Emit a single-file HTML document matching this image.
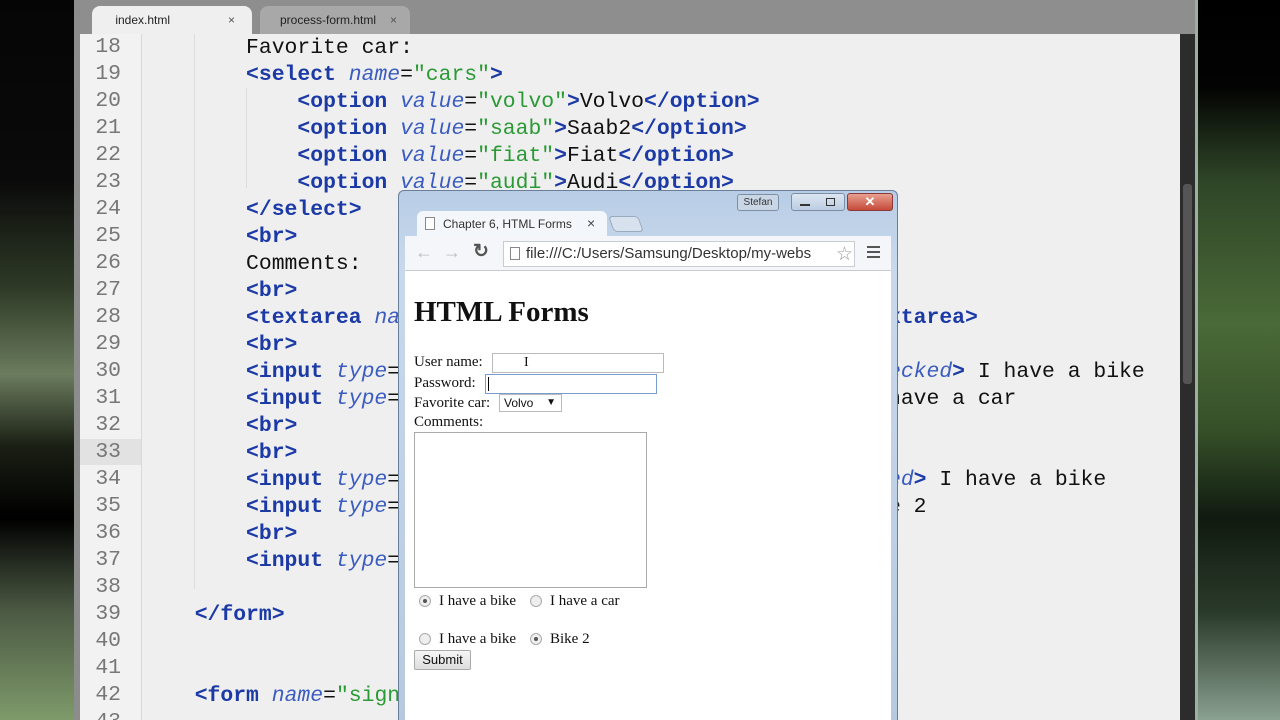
<!DOCTYPE html>
<html><head><meta charset="utf-8"><style>
*{margin:0;padding:0;box-sizing:border-box}
html{overflow:hidden;width:1280px;height:720px}
body{width:1280px;height:720px;overflow:hidden;background:#000;position:relative;font-family:"Liberation Sans",sans-serif}
.bgl{position:absolute;left:0;top:0;width:80px;height:720px;background:linear-gradient(180deg,#050505 0%,#0a0a0a 25%,#2e3a26 40%,#6b7c5e 52%,#1a1f14 62%,#000 72%,#4c5a44 85%,#7e9a6a 100%)}
.bgr{position:absolute;left:1196px;top:0;width:84px;height:720px;background:linear-gradient(180deg,#000 0%,#020302 12%,#2f4527 25%,#4a6a38 45%,#354f28 60%,#101a10 72%,#2a3a2a 85%,#8aa090 100%)}
.ed{position:absolute;left:74px;top:0;width:1124px;height:720px;background:#efefef;border-left:6px solid #8c8c8c;border-right:3px solid #9ab0a0;overflow:hidden}
.tabs{position:absolute;left:0;top:0;width:1118px;height:34px;background:#8e8e8e}
.tab{position:absolute;top:6px;height:28px;font-size:12px;color:#222;padding:7px 0 0 0}
.t1{left:12px;width:160px;background:#efefef;border-radius:8px 8px 0 0}
.t2{left:180px;width:150px;background:#a8a8a8;border-radius:8px 8px 0 0}
.gut{position:absolute;left:0;top:34px;width:62px;height:686px;background:#f2f2f2}
.sb{position:absolute;left:1100px;top:34px;width:18px;height:686px;background:#2c2c2c}
.sb i{position:absolute;left:3px;top:150px;width:9px;height:200px;background:#555;border-radius:3px}
pre{position:absolute;left:0;top:34px;font-family:"Liberation Mono",monospace;font-size:21.4px;line-height:27px;color:#111;white-space:pre}
.ln{color:#777;position:absolute;left:0;top:34px;text-align:right;width:41px;font-family:"Liberation Mono",monospace;font-size:21.4px;line-height:27px;white-space:pre}
.code{left:12px}
.hl{position:absolute;left:0;top:439px;width:62px;height:26px;background:#e2e2e2}
.t{color:#1c3aa6;font-weight:bold}.a{color:#3a5cc0;font-style:italic}.s{color:#2a9a34}
.guide{position:absolute;width:1px;background:#ddd}
.br{position:absolute;left:398px;top:190px;width:500px;height:530px;background:linear-gradient(180deg,#b8cde6,#c9d9ec 80px,#b6c9e0);border:1px solid #6a7e98;border-bottom:none;border-radius:6px 6px 0 0;overflow:hidden}
.content{position:absolute;left:6px;top:80px;width:486px;height:460px;background:#fff;font-family:"Liberation Serif",serif;font-size:15px;color:#111}
.ctab{position:absolute;left:18px;top:20px;width:190px;height:26px;background:#f3f6fa;border-radius:6px 6px 0 0;font-size:12px;color:#333;padding:6px 0 0 26px}
.toolbar{position:absolute;left:6px;top:45px;width:486px;height:35px;background:#f4f6f9;border-bottom:1px solid #c8ccd2}
.url{position:absolute;left:98px;top:5px;width:352px;height:26px;background:#fff;border:1px solid #c9ccd1;font-size:15px;color:#333;padding:3px 0 0 22px;overflow:hidden;white-space:nowrap}
.inp{position:absolute;border:1px solid #bbb;background:#fff}
.radio{position:absolute;width:12px;height:12px;border-radius:50%;border:1px solid #aaa;background:#eee}
.radio.on::after{content:"";position:absolute;left:3px;top:3px;width:4px;height:4px;border-radius:50%;background:#555}
.lb{position:absolute;white-space:nowrap}
</style></head><body>
<div class="bgl"></div><div class="bgr"></div>
<div class="ed">
<div class="tabs"><div class="tab t1">&nbsp;&nbsp;&nbsp;&nbsp;&nbsp;&nbsp;&nbsp;index.html<span style="position:absolute;left:136px;color:#555">×</span></div><div class="tab t2">&nbsp;&nbsp;&nbsp;&nbsp;&nbsp;&nbsp;process-form.html<span style="position:absolute;left:130px;color:#555">×</span></div></div>
<div class="gut"></div><div class="hl"></div>
<div class="guide" style="left:61px;top:34px;height:686px;background:#d8d8d8"></div>
<div class="guide" style="left:114px;top:34px;height:555px"></div>
<div class="guide" style="left:166px;top:88px;height:100px"></div>
<div class="ln">18
19
20
21
22
23
24
25
26
27
28
29
30
31
32
33
34
35
36
37
38
39
40
41
42
43</div>
<pre class="code" style="top:35px">            Favorite car:
            <span class="t">&lt;select</span> <span class="a">name</span>=<span class="s">"cars"</span><span class="t">&gt;</span>
                <span class="t">&lt;option</span> <span class="a">value</span>=<span class="s">"volvo"</span><span class="t">&gt;</span>Volvo<span class="t">&lt;/option&gt;</span>
                <span class="t">&lt;option</span> <span class="a">value</span>=<span class="s">"saab"</span><span class="t">&gt;</span>Saab2<span class="t">&lt;/option&gt;</span>
                <span class="t">&lt;option</span> <span class="a">value</span>=<span class="s">"fiat"</span><span class="t">&gt;</span>Fiat<span class="t">&lt;/option&gt;</span>
                <span class="t">&lt;option</span> <span class="a">value</span>=<span class="s">"audi"</span><span class="t">&gt;</span>Audi<span class="t">&lt;/option&gt;</span>
            <span class="t">&lt;/select&gt;</span>
            <span class="t">&lt;br&gt;</span>
            Comments:
            <span class="t">&lt;br&gt;</span>
            <span class="t">&lt;textarea</span> <span class="a">name</span>=<span class="s">"comments"</span> <span class="a">rows</span>=<span class="s">"10"</span> <span class="a">cols</span>=<span class="s">"30"</span><span class="t">&gt;&lt;/textarea&gt;</span>
            <span class="t">&lt;br&gt;</span>
            <span class="t">&lt;input</span> <span class="a">type</span>=<span class="s">"radio"</span> <span class="a">name</span>=<span class="s">"vehicle"</span> <span class="a">value</span>=<span class="s">"Bike"</span> <span class="a">checked</span><span class="t">&gt;</span> I have a bike
            <span class="t">&lt;input</span> <span class="a">type</span>=<span class="s">"radio"</span> <span class="a">name</span>=<span class="s">"vehicle"</span> <span class="a">value</span>=<span class="s">"Car"</span><span class="t">&gt;</span> I have a car
            <span class="t">&lt;br&gt;</span>
            <span class="t">&lt;br&gt;</span>
            <span class="t">&lt;input</span> <span class="a">type</span>=<span class="s">"radio"</span> <span class="a">name</span>=<span class="s">"bike"</span> <span class="a">value</span>=<span class="s">"Bike"</span> <span class="a">checked</span><span class="t">&gt;</span> I have a bike
            <span class="t">&lt;input</span> <span class="a">type</span>=<span class="s">"radio"</span> <span class="a">name</span>=<span class="s">"bike"</span> <span class="a">value</span>=<span class="s">"Bike2"</span><span class="t">&gt;</span> Bike 2
            <span class="t">&lt;br&gt;</span>
            <span class="t">&lt;input</span> <span class="a">type</span>=<span class="s">"submit"</span> <span class="a">value</span>=<span class="s">"Submit"</span><span class="t">&gt;</span>

        <span class="t">&lt;/form&gt;</span>


        <span class="t">&lt;form</span> <span class="a">name</span>=<span class="s">"signup"</span><span class="t">&gt;</span>
</pre>
<div class="sb"><i></i></div>
</div>

<div class="br">
<div style="position:absolute;left:338px;top:3px;width:42px;height:17px;border:1px solid #7d8ea4;border-radius:3px;background:#c9d6e6;font-size:10px;color:#333;text-align:center;line-height:15px">Stefan</div>
<div style="position:absolute;left:392px;top:2px;width:54px;height:18px;border:1px solid #7d8ea4;border-radius:3px;background:linear-gradient(#dce6f2,#bccde2)"><span style="position:absolute;left:8px;top:10px;width:10px;height:2px;background:#333"></span><span style="position:absolute;left:34px;top:4px;width:9px;height:8px;border:1px solid #333"></span></div>
<div style="position:absolute;left:448px;top:2px;width:46px;height:18px;border:1px solid #8a3a3a;border-radius:3px;background:linear-gradient(#e8a090,#c64a3a);color:#fff;font-size:13px;font-weight:bold;text-align:center;line-height:16px">✕</div>
<div class="ctab"><span style="position:absolute;left:8px;top:6px;width:10px;height:13px;border:1px solid #888;background:#fff"></span>Chapter 6, HTML Forms<span style="position:absolute;left:170px;top:4px;font-size:14px;color:#444">×</span></div>
<div style="position:absolute;left:212px;top:25px;width:30px;height:16px;background:#d8e2ee;border:1px solid #9aaac0;border-radius:4px;transform:skewX(20deg)"></div>
<div class="toolbar">
<span style="position:absolute;left:10px;top:6px;font-size:18px;color:#bbb">←</span>
<span style="position:absolute;left:38px;top:6px;font-size:18px;color:#bbb">→</span>
<span style="position:absolute;left:68px;top:4px;font-size:19px;color:#555;font-weight:bold">↻</span>
<div class="url"><span style="position:absolute;left:6px;top:5px;width:10px;height:13px;border:1px solid #888"></span>file:///C:/Users/Samsung/Desktop/my-webs<span style="position:absolute;right:1px;top:1px;background:#fff;color:#999;font-size:19px">☆</span></div>
<span style="position:absolute;left:462px;top:10px;width:13px;height:2px;background:#555;box-shadow:0 5px 0 #555,0 10px 0 #555"></span>
</div>
<div class="content">
<div style="position:absolute;left:9px;top:25px;font-size:29px;font-weight:bold">HTML Forms</div>
<div class="lb" style="left:9px;top:83px">User name:</div>
<div class="inp" style="left:87px;top:82px;width:172px;height:20px"><span style="position:absolute;left:31px;top:1px;font-size:14px">I</span></div>
<div class="lb" style="left:9px;top:104px">Password:</div>
<div class="inp" style="left:80px;top:103px;width:172px;height:20px;border-color:#7a9ccc"><span style="position:absolute;left:2px;top:2px;width:1px;height:14px;background:#000"></span></div>
<div class="lb" style="left:9px;top:124px">Favorite car:</div>
<div class="inp" style="left:94px;top:123px;width:63px;height:18px;font-family:'Liberation Sans',sans-serif;font-size:12px;padding:1px 4px">Volvo <span style="position:absolute;right:5px;font-size:10px;top:2px">▼</span></div>
<div class="lb" style="left:9px;top:143px">Comments:</div>
<div class="inp" style="left:9px;top:161px;width:233px;height:156px;border-color:#aaa"></div>
<div class="radio on" style="left:14px;top:324px"></div><div class="lb" style="left:34px;top:322px">I have a bike</div>
<div class="radio" style="left:125px;top:324px"></div><div class="lb" style="left:145px;top:322px">I have a car</div>
<div class="radio" style="left:14px;top:362px"></div><div class="lb" style="left:34px;top:360px">I have a bike</div>
<div class="radio on" style="left:125px;top:362px"></div><div class="lb" style="left:145px;top:360px">Bike 2</div>
<div style="position:absolute;left:9px;top:379px;width:57px;height:20px;border:1px solid #aaa;border-radius:2px;background:linear-gradient(#f6f6f6,#ddd);font-family:'Liberation Sans',sans-serif;font-size:13px;text-align:center;line-height:18px">Submit</div>
</div>
</div>
</body></html>
